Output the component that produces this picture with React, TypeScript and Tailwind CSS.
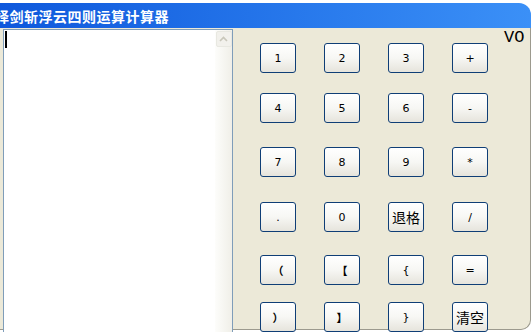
const keys = [
  { mt: 'mt-[15px]', items: ['1', '2', '3', '+'] },
  { mt: 'mt-[20px]', items: ['4', '5', '6', '-'] },
  { mt: 'mt-[24px]', items: ['7', '8', '9', '*'] },
  { mt: 'mt-[25px]', items: ['.', '0', '退格', '/'] },
  { mt: 'mt-[23px]', items: ['（', '【', '{', '='] },
  { mt: 'mt-[17px]', items: ['）', '】', '}', '清空'] },
];

function Key({ label }: { label: string }) {
  const wide = /[\u4e00-\u9fff]/.test(label);
  const bracket = /[（）【】]/.test(label);
  return (
    <button
      className={
        'w-[36px] h-[30px] rounded-[3px] border border-[#0F3E76] bg-gradient-to-b from-white via-[#F7F7F4] to-[#E6E4DC] flex items-center justify-center text-black leading-none ' +
        (wide
          ? 'text-[14px] font-[family-name:Noto_Sans_CJK_SC,sans-serif]'
          : bracket
          ? 'text-[11px] font-bold font-[family-name:Noto_Sans_CJK_SC,sans-serif]'
          : 'text-[11px] font-[family-name:DejaVu_Sans,sans-serif]')
      }
    >
      {label}
    </button>
  );
}

export default function App() {
  return (
    <div className="w-[532px] h-[332px] bg-white overflow-hidden">
      {/* title bar */}
      <div className="mt-[3px] w-[531px] h-[25px] rounded-tr-[12px] bg-gradient-to-r from-[#0F58DC] to-[#3B90F7] flex items-center overflow-hidden">
        <span className="-ml-[5px] shrink-0 whitespace-nowrap text-white font-bold text-[14px] tracking-[0.5px] font-[family-name:Noto_Sans_CJK_SC,sans-serif] leading-none">
          择剑斩浮云四则运算计算器
        </span>
      </div>

      {/* body */}
      <div className="w-[531px] h-[302px] bg-[#ECE9D8] border-r border-[#9C9A8E] border-b rounded-br-[10px] flex">
        {/* text area */}
        <div className="ml-[3px] mt-[1px] w-[230px] h-[310px] border border-[#7F9DB9] bg-white flex">
          <div className="flex-1 pl-[1px] pt-[1px]">
            <div className="w-[2px] h-[17px] bg-black" />
          </div>
          <div className="w-[17px] bg-gradient-to-r from-[#FDFDFB] to-[#F0EFE8] flex flex-col items-center">
            <div className="mt-[1px] w-[16px] h-[16px] rounded-[2px] border border-[#E8E8E1] bg-[#F2F1EC] flex items-center justify-center">
              <svg width="9" height="6" viewBox="0 0 9 6">
                <path d="M1 5 L4.5 1.5 L8 5" fill="none" stroke="#C9C7BA" strokeWidth="1.6" />
              </svg>
            </div>
          </div>
        </div>

        {/* keypad */}
        <div className="ml-[27px] flex flex-col">
          {keys.map((r, i) => (
            <div key={i} className={'flex gap-[28px] ' + r.mt}>
              {r.items.map((k) => (
                <Key key={k} label={k} />
              ))}
            </div>
          ))}
        </div>

        <div className="ml-[16px] mt-[1px] text-[17px] leading-[18px] font-normal text-black font-mono">
          VO
        </div>
      </div>
    </div>
  );
}
